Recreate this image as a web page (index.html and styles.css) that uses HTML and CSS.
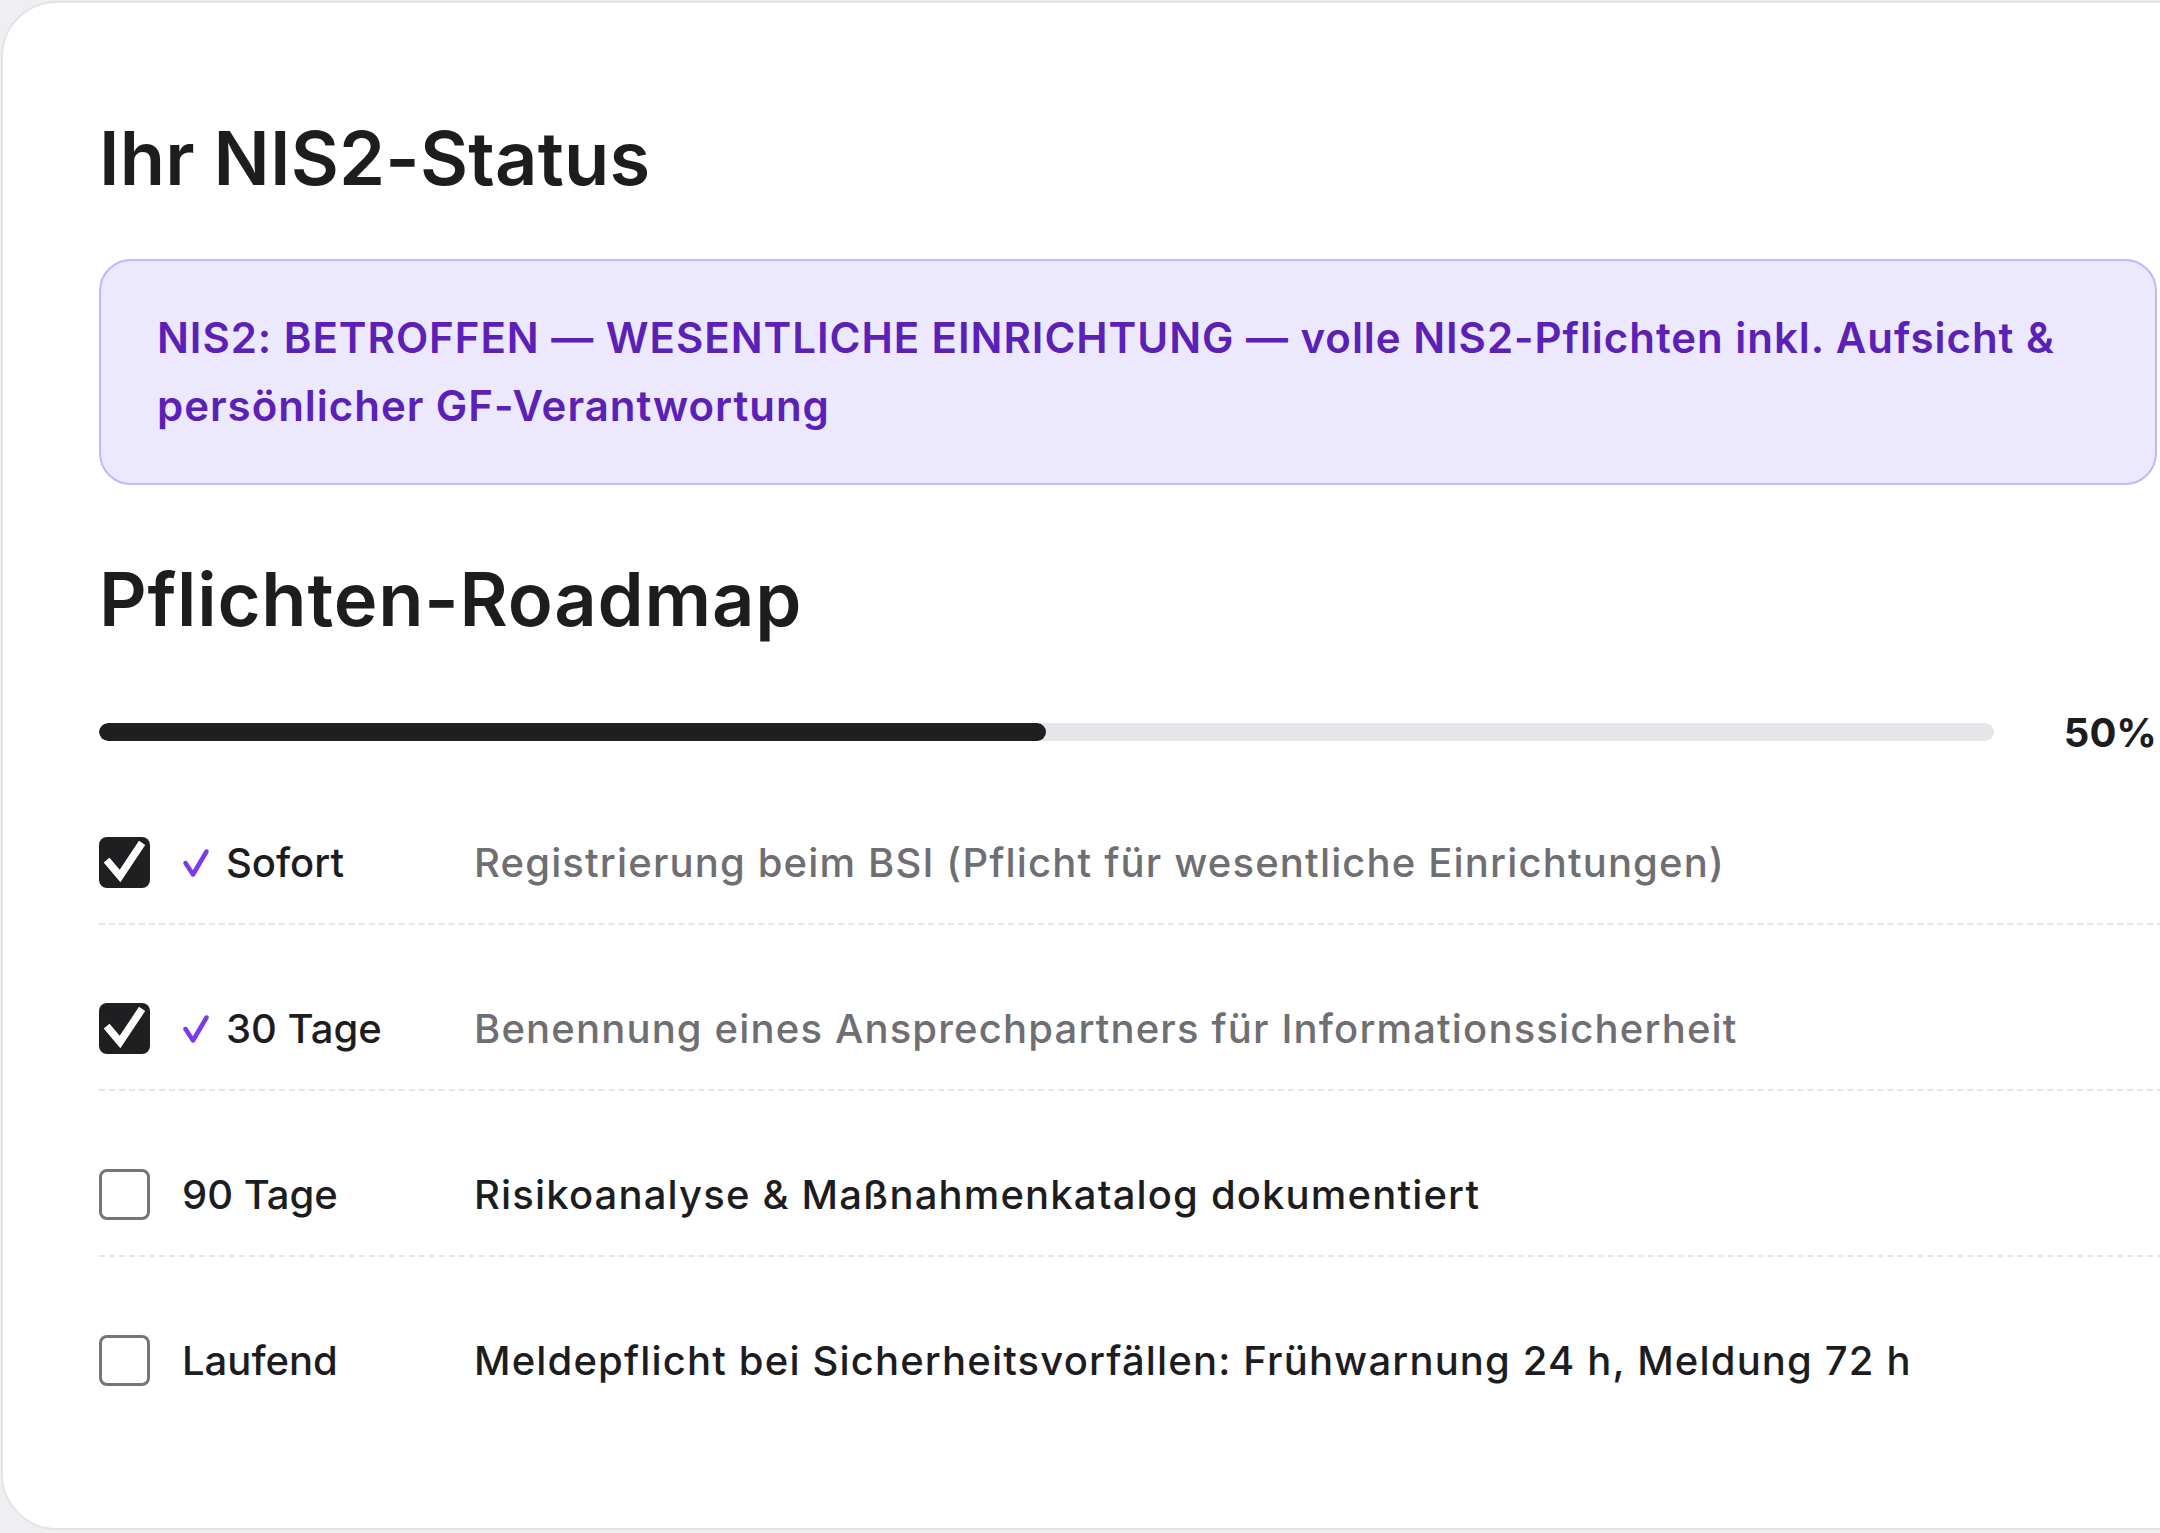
FILE: index.html
```html
<!DOCTYPE html>
<html lang="de">
<head>
	<meta charset="utf-8">
	<title>NIS2-Status</title>
	<link rel="stylesheet" href="styles.css">
</head>
<body>
	<div class="page">
		<section class="card">
			<h1 class="title">Ihr NIS2-Status</h1>

			<div class="alert">
				NIS2: BETROFFEN — WESENTLICHE EINRICHTUNG — volle NIS2-Pflichten inkl. Aufsicht &amp; persönlicher GF-Verantwortung
			</div>

			<h2 class="title title-sub">Pflichten-Roadmap</h2>

			<div class="progress">
				<div class="track"><div class="fill" style="width: 50%"></div></div>
				<span class="percent">50%</span>
			</div>

			<ul class="roadmap">
				<li class="step done">
					<span class="box"><svg viewBox="0 0 51 51"><path d="M10 26 L21 39 L41 9"/></svg></span>
					<span class="when"><svg class="tick" viewBox="0 0 28 30"><path d="M3.5 15 L11 26.5 L24.5 3.5"/></svg>Sofort</span>
					<span class="what">Registrierung beim BSI (Pflicht für wesentliche Einrichtungen)</span>
				</li>
				<li class="step done">
					<span class="box"><svg viewBox="0 0 51 51"><path d="M10 26 L21 39 L41 9"/></svg></span>
					<span class="when"><svg class="tick" viewBox="0 0 28 30"><path d="M3.5 15 L11 26.5 L24.5 3.5"/></svg>30 Tage</span>
					<span class="what">Benennung eines Ansprechpartners für Informationssicherheit</span>
				</li>
				<li class="step">
					<span class="box"></span>
					<span class="when">90 Tage</span>
					<span class="what">Risikoanalyse &amp; Maßnahmenkatalog dokumentiert</span>
				</li>
				<li class="step">
					<span class="box"></span>
					<span class="when">Laufend</span>
					<span class="what">Meldepflicht bei Sicherheitsvorfällen: Frühwarnung 24 h, Meldung 72 h</span>
				</li>
			</ul>
		</section>
	</div>
</body>
</html>
```

FILE: styles.css
```css
html, body {
	margin: 0;
	background: #efeff2;
	overflow: hidden;
}
body {
	font-family: Inter, "Noto Sans", sans-serif;
	color: #1d1d1f;
}
.page {
	padding: 1px 0 0 1px;
}
.card {
	box-sizing: border-box;
	width: 2254px;
	height: 1529px;
	background: #fff;
	border: 2px solid #e4e4e8;
	border-radius: 56px;
	padding: 111px 96px 0;
}
.title {
	margin: 0;
	font-size: 74px;
	line-height: 89px;
	font-weight: 600;
	letter-spacing: 0.2px;
}
.title-sub {
	margin-top: 70px;
	letter-spacing: 0.8px;
}
.alert {
	margin-top: 56px;
	background: #ece8fd;
	border: 2px solid #c4b5fd;
	border-radius: 32px;
	padding: 43px 56px;
	color: #5b21b6;
	font-size: 42px;
	line-height: 68px;
	font-weight: 600;
	letter-spacing: 0.023em;
}
.progress {
	margin-top: 66px;
	height: 44px;
	display: flex;
	align-items: center;
	gap: 70px;
}
.track {
	flex: 1;
	height: 18px;
	border-radius: 9px;
	background: #e6e6ea;
	overflow: hidden;
}
.fill {
	height: 100%;
	background: #1f1f21;
	border-radius: 9px;
}
.percent {
	min-width: 92px;
	text-align: right;
	font-size: 40px;
	font-weight: 700;
}
.roadmap {
	list-style: none;
	margin: 48px 0 0;
	padding: 0;
	display: flex;
	flex-direction: column;
	gap: 43px;
}
.step {
	display: flex;
	align-items: center;
	padding: 35px 0;
	border-bottom: 2px dashed #e6e6ea;
	font-size: 40px;
	line-height: 1.2;
	font-weight: 500;
	margin-right: -96px;
}
.step:last-child {
	border-bottom: none;
}
.box {
	box-sizing: border-box;
	width: 51px;
	height: 51px;
	flex: none;
	border: 3px solid #767679;
	border-radius: 8px;
	background: #fff;
}
.done .box {
	border: none;
	background: #1f1f21;
}
.box svg {
	display: block;
	width: 51px;
	height: 51px;
	fill: none;
	stroke: #fff;
	stroke-width: 7.5;
	stroke-linecap: square;
	stroke-linejoin: miter;
}
.when {
	width: 292px;
	margin-left: 32px;
	flex: none;
	display: flex;
	align-items: center;
}
.tick {
	width: 28px;
	height: 30px;
	margin: 0 16px 0 0;
	fill: none;
	stroke: #7c3aed;
	stroke-width: 4.5;
	stroke-linecap: round;
	stroke-linejoin: round;
}
.what {
	color: #1d1d1f;
	letter-spacing: 0.029em;
}
.done .what {
	color: #6e6e73;
}
```
